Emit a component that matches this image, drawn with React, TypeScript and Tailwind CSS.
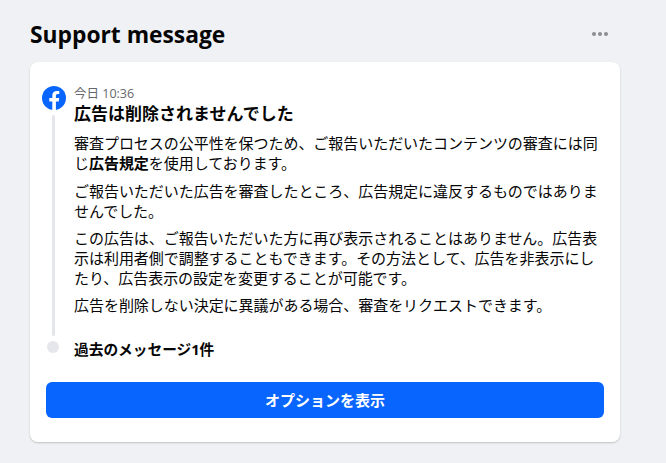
const font = { fontFamily: '"Open Sans", "Noto Sans CJK JP", sans-serif' };

function FacebookLogo() {
    return (
        <svg viewBox="0 0 24 24" className="h-6 w-6 shrink-0">
            <circle cx="12" cy="12" r="12" fill="#0866ff" />
            <path
                fill="#fff"
                d="M16.7 15.4l.5-3.4h-3.3V9.8c0-.9.5-1.8 1.9-1.8h1.5V5.1s-1.3-.2-2.6-.2c-2.7 0-4.4 1.6-4.4 4.6V12h-3v3.4h3V24h3.6v-8.6h2.8z"
            />
        </svg>
    );
}

export default function App() {
    return (
        <div className="min-h-[463px] bg-[#f0f1f5] pl-[30px] pr-[46px] pt-[19px] text-[#050505]" style={font}>
            {/* Header */}
            <div className="flex h-[32px] items-center justify-between">
                <h1 className="text-[22.8px] font-bold leading-[32px]">Support message</h1>
                <div className="-mt-[2px] mr-[12px] flex gap-[2px]">
                    <span className="h-1 w-1 rounded-full bg-[#8a8d91]" />
                    <span className="h-1 w-1 rounded-full bg-[#8a8d91]" />
                    <span className="h-1 w-1 rounded-full bg-[#8a8d91]" />
                </div>
            </div>

            {/* Card */}
            <div className="mt-[11px] h-[380px] rounded-lg bg-white px-[12px] pt-[22px] shadow-[0_1px_2px_rgba(0,0,0,0.2)]">
                <div className="flex gap-2">
                    <div className="flex w-6 flex-col items-center">
                        <div className="mt-[2px]">
                            <FacebookLogo />
                        </div>
                        <div className="mr-[2px] mt-[5px] h-[221px] w-[3px] rounded-full bg-[#e4e6eb]" />
                        <div className="mr-[2px] mt-[5px] h-3 w-3 rounded-full bg-[#e4e6eb]" />
                    </div>
                    <div className="min-w-0 flex-1">
                        <div className="text-[12.5px] leading-[20px] text-[#65676b]">今日 10:36</div>
                        <h2 className="text-[17px] font-bold leading-[20px]">広告は削除されませんでした</h2>
                        <div className="mt-[9px] flex flex-col gap-2 text-[15px] leading-[20px] tracking-[-0.04px]">
                            <p>
                                審査プロセスの公平性を保つため、ご報告いただいたコンテンツの審査には同
                                <br />
                                じ<b>広告規定</b>を使用しております。
                            </p>
                            <p>
                                ご報告いただいた広告を審査したところ、広告規定に違反するものではありま
                                <br />
                                せんでした。
                            </p>
                            <p className="-mt-[1px]">
                                この広告は、ご報告いただいた方に再び表示されることはありません。広告表
                                <br />
                                示は利用者側で調整することもできます。その方法として、広告を非表示にし
                                <br />
                                たり、広告表示の設定を変更することが可能です。
                            </p>
                            <p className="-mt-[1px]">広告を削除しない決定に異議がある場合、審査をリクエストできます。</p>
                        </div>
                        <div className="mt-[24px] text-[14.7px] font-bold leading-[20px]">過去のメッセージ1件</div>
                    </div>
                </div>
                <button className="ml-1 mt-[23px] h-9 w-[558px] rounded-md bg-[#0866ff] text-[15px] font-bold text-white">
                    オプションを表示
                </button>
            </div>
        </div>
    );
}
